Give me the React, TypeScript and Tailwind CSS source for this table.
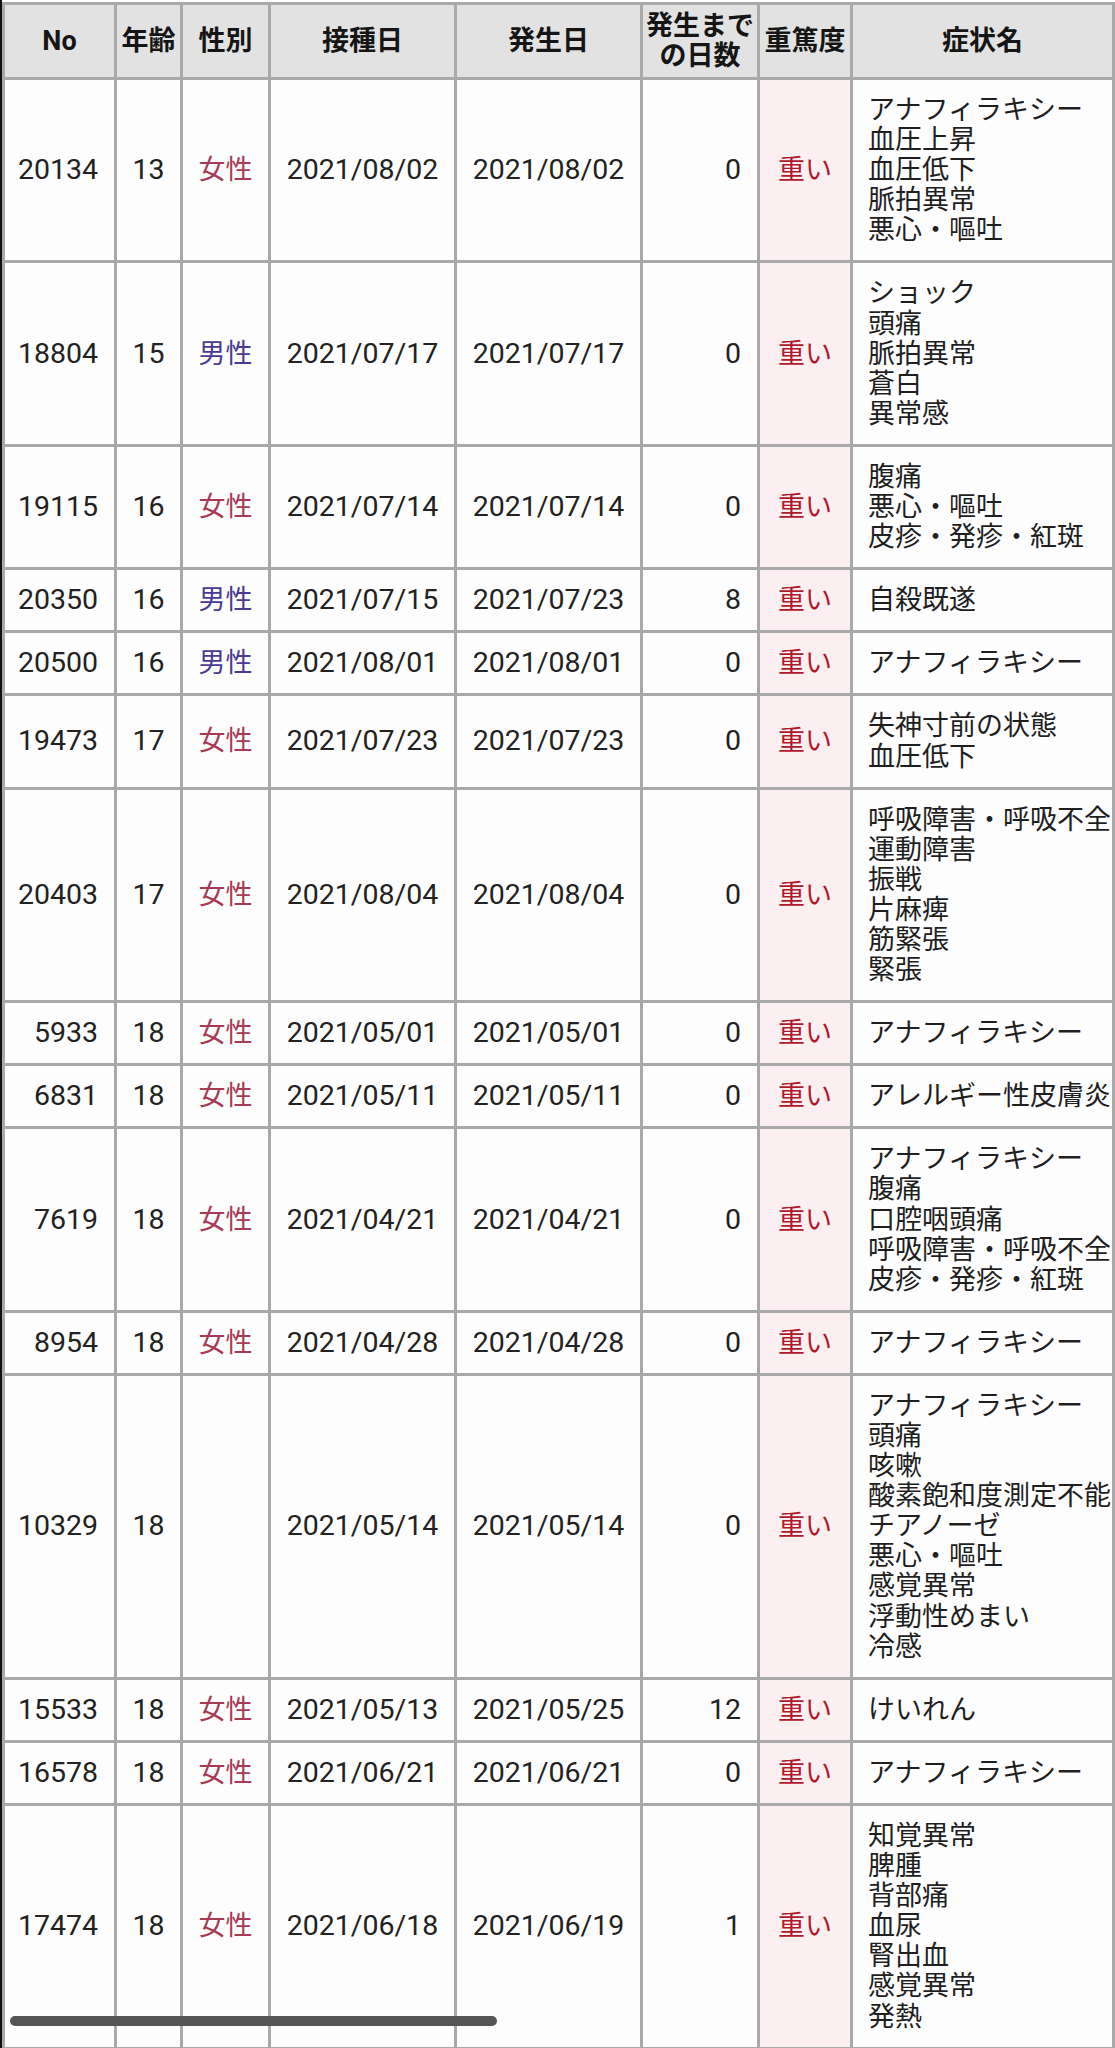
import React from "react";

type Row = {
  no: string;
  age: string;
  sex: "女性" | "男性" | "";
  vac: string;
  onset: string;
  days: string;
  symptoms: string[];
};

const rows: Row[] = [
  { no: "20134", age: "13", sex: "女性", vac: "2021/08/02", onset: "2021/08/02", days: "0", symptoms: ["アナフィラキシー", "血圧上昇", "血圧低下", "脈拍異常", "悪心・嘔吐"] },
  { no: "18804", age: "15", sex: "男性", vac: "2021/07/17", onset: "2021/07/17", days: "0", symptoms: ["ショック", "頭痛", "脈拍異常", "蒼白", "異常感"] },
  { no: "19115", age: "16", sex: "女性", vac: "2021/07/14", onset: "2021/07/14", days: "0", symptoms: ["腹痛", "悪心・嘔吐", "皮疹・発疹・紅斑"] },
  { no: "20350", age: "16", sex: "男性", vac: "2021/07/15", onset: "2021/07/23", days: "8", symptoms: ["自殺既遂"] },
  { no: "20500", age: "16", sex: "男性", vac: "2021/08/01", onset: "2021/08/01", days: "0", symptoms: ["アナフィラキシー"] },
  { no: "19473", age: "17", sex: "女性", vac: "2021/07/23", onset: "2021/07/23", days: "0", symptoms: ["失神寸前の状態", "血圧低下"] },
  { no: "20403", age: "17", sex: "女性", vac: "2021/08/04", onset: "2021/08/04", days: "0", symptoms: ["呼吸障害・呼吸不全", "運動障害", "振戦", "片麻痺", "筋緊張", "緊張"] },
  { no: "5933", age: "18", sex: "女性", vac: "2021/05/01", onset: "2021/05/01", days: "0", symptoms: ["アナフィラキシー"] },
  { no: "6831", age: "18", sex: "女性", vac: "2021/05/11", onset: "2021/05/11", days: "0", symptoms: ["アレルギー性皮膚炎"] },
  { no: "7619", age: "18", sex: "女性", vac: "2021/04/21", onset: "2021/04/21", days: "0", symptoms: ["アナフィラキシー", "腹痛", "口腔咽頭痛", "呼吸障害・呼吸不全", "皮疹・発疹・紅斑"] },
  { no: "8954", age: "18", sex: "女性", vac: "2021/04/28", onset: "2021/04/28", days: "0", symptoms: ["アナフィラキシー"] },
  { no: "10329", age: "18", sex: "", vac: "2021/05/14", onset: "2021/05/14", days: "0", symptoms: ["アナフィラキシー", "頭痛", "咳嗽", "酸素飽和度測定不能", "チアノーゼ", "悪心・嘔吐", "感覚異常", "浮動性めまい", "冷感"] },
  { no: "15533", age: "18", sex: "女性", vac: "2021/05/13", onset: "2021/05/25", days: "12", symptoms: ["けいれん"] },
  { no: "16578", age: "18", sex: "女性", vac: "2021/06/21", onset: "2021/06/21", days: "0", symptoms: ["アナフィラキシー"] },
  { no: "17474", age: "18", sex: "女性", vac: "2021/06/18", onset: "2021/06/19", days: "1", symptoms: ["知覚異常", "脾腫", "背部痛", "血尿", "腎出血", "感覚異常", "発熱"] },
];

const headCell = "bg-[#e2e2e2] flex items-center justify-center text-center font-bold text-[#151515] py-[6px] leading-[30px]";
const cell = "bg-[#fdfdfd] flex items-center py-[15px] leading-[30.1px]";
const num = "text-[28.5px] text-[#222]";

export default function App() {
  return (
    <div className="relative min-h-[2048px] w-[1115px] overflow-hidden bg-white font-['Roboto','Noto_Sans_CJK_JP',sans-serif] text-[27px] text-[#1f1f1f]">
      <div className="border-l-2 border-[#111] pt-[2px]">
        <div className="grid grid-cols-[109px_63px_85px_183px_183px_114px_90px_259px] gap-[3px] bg-[#a9a9a9] p-[3px]">
          <div className={headCell}>No</div>
          <div className={headCell}>年齢</div>
          <div className={headCell}>性別</div>
          <div className={headCell}>接種日</div>
          <div className={headCell}>発生日</div>
          <div className={headCell}>
            発生まで
            <br />
            の日数
          </div>
          <div className={headCell}>重篤度</div>
          <div className={headCell}>症状名</div>

          {rows.map((r) => (
            <React.Fragment key={r.no}>
              <div className={`${cell} ${num} justify-end pr-[16px]`}>{r.no}</div>
              <div className={`${cell} ${num} justify-center`}>{r.age}</div>
              <div
                className={`${cell} justify-center ${
                  r.sex === "女性" ? "text-[#a83a55]" : "text-[#4a3a94]"
                }`}
              >
                {r.sex}
              </div>
              <div className={`${cell} ${num} justify-center`}>{r.vac}</div>
              <div className={`${cell} ${num} justify-center`}>{r.onset}</div>
              <div className={`${cell} ${num} justify-end pr-[16px]`}>{r.days}</div>
              <div className="bg-[#fbeff1] flex items-center justify-center py-[15px] leading-[30.1px] text-[#b0182d]">
                重い
              </div>
              <div className={`${cell} pl-[15px]`}>
                <div className="flex flex-col whitespace-nowrap">
                  {r.symptoms.map((s, i) => (
                    <span key={i}>{s}</span>
                  ))}
                </div>
              </div>
            </React.Fragment>
          ))}
        </div>
      </div>
      <div className="absolute left-[10px] top-[2016px] h-[10px] w-[487px] rounded-full bg-[#555]" />
    </div>
  );
}
